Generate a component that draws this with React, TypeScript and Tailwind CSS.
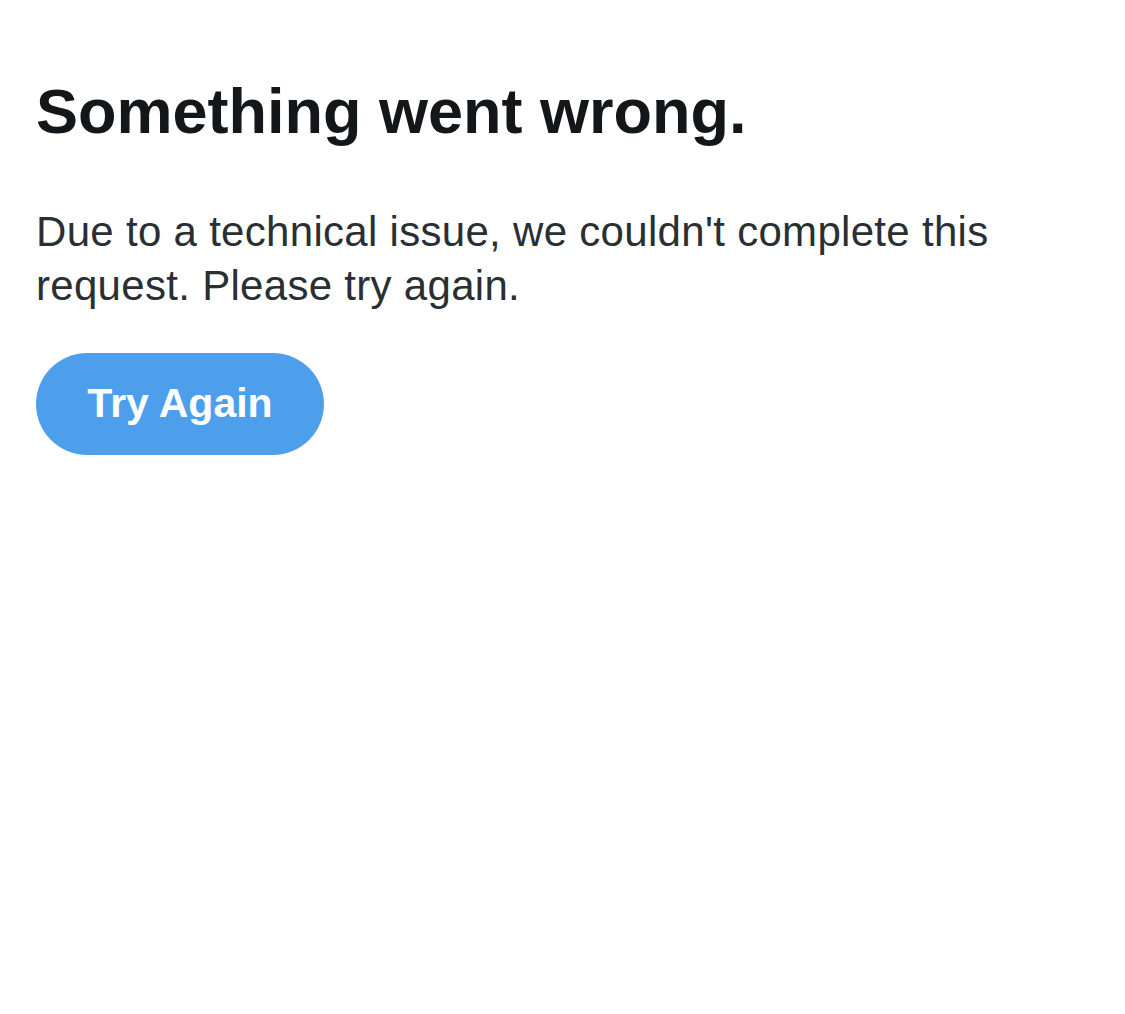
export default function App() {
  return (
    <div className="min-h-screen bg-white px-[36px] pt-[73px]" style={{ fontFamily: '"Liberation Sans", Arial, sans-serif' }}>
      <h1 className="text-[63px] font-bold leading-[76px] text-[#14171a]">Something went wrong.</h1>
      <p className="mt-[56px] text-[42px] leading-[54px] tracking-[0.3px] text-[#292f33]">
        Due to a technical issue, we couldn't complete this request. Please try again.
      </p>
      <button className="mt-[40px] flex h-[102px] w-[288px] items-center justify-center rounded-full bg-[#4d9fec] text-[41px] font-bold text-white">
        Try Again
      </button>
    </div>
  );
}
